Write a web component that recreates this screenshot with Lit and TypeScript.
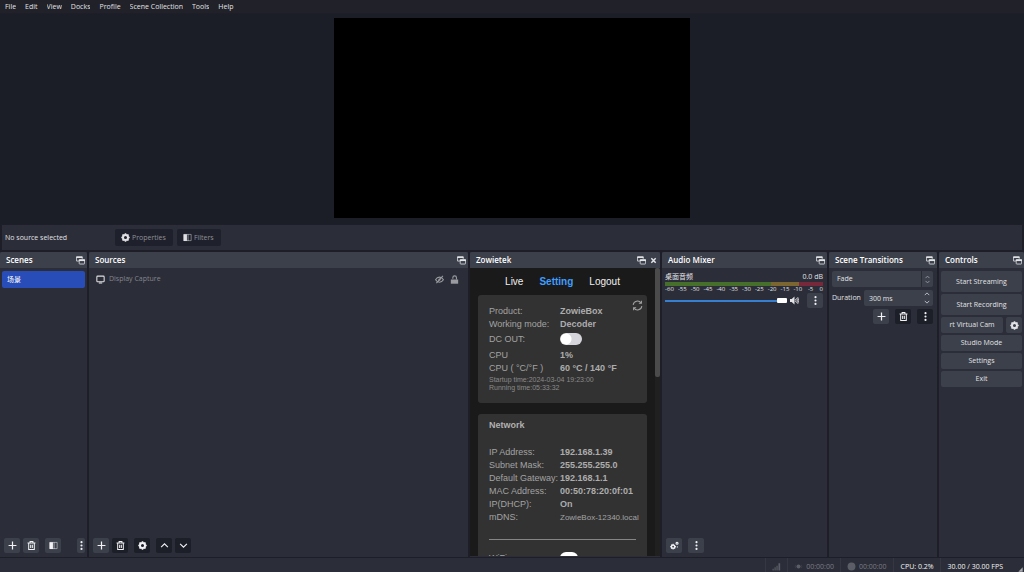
import { LitElement, html, svg, css } from "lit";
import { customElement, property } from "lit/decorators.js";

const glyphs: Record<string, unknown> = {
  plus: svg`<path d="M8 1v14M1 8h14" stroke="currentColor" stroke-width="2.200" fill="none"/>`,
  trash: svg`<path d="M1 3.500h14M5.500 3V1h5v2M3 4v11h10V4M6.500 6.500v6M9.500 6.500v6" stroke="currentColor" stroke-width="1.800" fill="none"/>`,
  filter: svg`<path d="M1.500 2.500h13v11h-13z" stroke="currentColor" stroke-width="1.200" fill="none" opacity=".7"/><path d="M1 2h6v12H1z" fill="currentColor"/><path d="M8 2h2v12H8z" fill="currentColor" opacity=".5"/>`,
  more: svg`<circle cx="8" cy="2" r="1.900" fill="currentColor"/><circle cx="8" cy="8" r="1.900" fill="currentColor"/><circle cx="8" cy="14" r="1.900" fill="currentColor"/>`,
  gear: svg`<circle cx="8" cy="8" r="4.500" stroke="currentColor" stroke-width="3.600" fill="none"/><path d="M8 .500v3M8 12.500v3M.500 8h3M12.500 8h3M2.700 2.700l2 2M11.300 11.300l2 2M13.300 2.700l-2 2M4.700 11.300l-2 2" stroke="currentColor" stroke-width="2.800"/>`,
  gears: svg`<circle cx="5.500" cy="10" r="3" stroke="currentColor" stroke-width="2.600" fill="none"/><path d="M5.500 5v2M5.500 13v2M.500 10h2M8.500 10h2M2 6.500l1.500 1.500M9 13.500L7.500 12M2 13.500L3.500 12" stroke="currentColor" stroke-width="1.800"/><circle cx="12.500" cy="4" r="1.800" stroke="currentColor" stroke-width="2" fill="none"/><circle cx="13" cy="10.500" r="1" fill="currentColor"/>`,
  up: svg`<path d="M2 11l6-6 6 6" stroke="currentColor" stroke-width="2" fill="none"/>`,
  down: svg`<path d="M2 5l6 6 6-6" stroke="currentColor" stroke-width="2" fill="none"/>`,
  float: svg`<path d="M5 9H1V1.500h10V5" stroke="currentColor" stroke-width="1.400" fill="none"/><path d="M.500 1h11v2.500H.500z" fill="currentColor"/><rect x="5.700" y="6.700" width="9.600" height="7.600" rx="1" stroke="currentColor" stroke-width="1.400" fill="none"/><path d="M5 6h11v3H5z" fill="currentColor"/>`,
  close: svg`<path d="M3 3l10 10M13 3L3 13" stroke="currentColor" stroke-width="3.400" fill="none"/>`,
  monitor: svg`<rect x="1.500" y="2" width="13" height="10" rx="1.500" stroke="currentColor" stroke-width="1.900" fill="none"/><path d="M5 14.200h6" stroke="currentColor" stroke-width="2"/>`,
  hidden: svg`<path d="M1 8.500C3 5 5.500 3.800 8 3.800s5 1.200 7 4.700c-2 3.300-4.500 4.300-7 4.300s-5-1-7-4.300z" stroke="currentColor" stroke-width="1.900" fill="none"/><circle cx="8" cy="8.200" r="2" fill="currentColor"/><path d="M2.500 14.500L14 1.500" stroke="currentColor" stroke-width="2"/>`,
  unlock: svg`<path d="M1.500 8h13v7.500h-13z" fill="currentColor"/><path d="M5 6.500V5C5 .500 11.500 .500 11.500 5v3" stroke="currentColor" stroke-width="2" fill="none"/>`,
  speaker: svg`<path d="M0 5.300h3L8 1v14l-5-4.300H0z" fill="currentColor"/><path d="M9.800 5.500q1.700 2.500 0 5M11.800 3.500q3 4.500 0 9M13.700 2q3.500 6 0 12" stroke="currentColor" stroke-width="1.500" fill="none"/>`,
  refresh: svg`<path d="M1.700 7a6.300 6.300 0 0 1 11.500-2.700M14.300 9a6.300 6.300 0 0 1-11.500 2.700" stroke="currentColor" stroke-width="1.500" fill="none"/><path d="M13.700 1v3.700H10M2.300 15v-3.700H6" stroke="currentColor" stroke-width="1.500" fill="none"/>`,
  spin: svg`<path d="M4.500 5.500L8 2l3.500 3.500M4.500 10.500L8 14l3.500-3.500" stroke="currentColor" stroke-width="1.600" fill="none"/>`,
  signal: svg`<path d="M1 12h2v3H1zM4.500 9.500h2V15h-2zM8 6.500h2V15H8zM11.500 2h3v13h-3z" fill="currentColor"/>`,
  live: svg`<circle cx="8" cy="8" r="3.600" fill="currentColor"/><path d="M3 5q-2 3 0 6M13 5q2 3 0 6" stroke="currentColor" stroke-width="1" fill="none" opacity=".5"/>`,
  dot: svg`<circle cx="8" cy="8" r="7" fill="currentColor"/>`,
  grip: svg`<path d="M15 1v14H1z" fill="currentColor"/>`,
};

const icon = (name: string, cls = "") =>
  html`<svg class="icon ${cls}" viewBox="0 0 16 16" aria-hidden="true">${glyphs[name]}</svg>`;

const shared = css`
  * { box-sizing: border-box; }
  button {
    font: inherit;
    color: inherit;
    border: 0;
    margin: 0;
    padding: 0;
    background: none;
    display: flex;
    align-items: center;
    justify-content: center;
    white-space: nowrap;
    overflow: hidden;
  }
  .icon { width: 9px; height: 9px; flex: none; display: block; }
`;

@customElement("obs-dock")
export class ObsDock extends LitElement {
  @property() heading = "";
  @property({ type: Boolean }) closable = false;

  static styles = [
    shared,
    css`
      :host { display: flex; flex-direction: column; min-width: 0; min-height: 0; background: #2b2d38; }
      header {
        display: flex;
        align-items: center;
        gap: 2px;
        height: 16px;
        flex: none;
        padding: 0 2px 0 6px;
        background: #3c404b;
        border-radius: 2px 2px 0 0;
      }
      h2 { flex: 1; margin: 0; font-size: 8px; line-height: 12px; font-weight: 600; color: #fff; white-space: nowrap; }
      .tool { width: 10px; height: 12px; color: #e4e5e8; }
      .closer { width: 7px; height: 7px; }
      .content { flex: 1; min-height: 0; display: flex; flex-direction: column; }
    `,
  ];

  render() {
    return html`
      <header>
        <h2>${this.heading}</h2>
        <button class="tool" aria-label="Undock ${this.heading}">${icon("float")}</button>
        ${this.closable
          ? html`<button class="tool" aria-label="Close ${this.heading}">${icon("close", "closer")}</button>`
          : null}
      </header>
      <div class="content"><slot></slot></div>
    `;
  }
}

@customElement("zowie-panel")
export class ZowiePanel extends LitElement {
  static styles = [
    shared,
    css`
      :host {
        flex: 1;
        min-height: 0;
        margin-bottom: 1px;
        display: flex;
        background: #1a1a1a;
        color: #a3a3a3;
        font-family: "Liberation Sans", Arial, sans-serif;
        font-size: 9px;
        line-height: 13px;
      }
      .page { flex: 1; min-width: 0; padding: 0 8px; overflow: hidden; }
      nav { display: flex; justify-content: center; gap: 16px; padding: 8px 0 7px; font-size: 10px; line-height: 12px; }
      nav a { color: #f0f0f0; text-decoration: none; }
      nav a.current { color: #409eff; font-weight: 700; }
      .card { position: relative; background: #323232; border-radius: 3px; padding: 10px 11px 11px; }
      .card + .card { margin-top: 11px; padding-top: 4px; }
      .row { display: grid; grid-template-columns: 71px 1fr; white-space: nowrap; }
      .row b { font-weight: 700; color: #adadad; }
      .switchrow { align-items: center; height: 14px; margin: 1px 0 3px; }
      .note { margin: 0; font-size: 7px; line-height: 8px; color: #8a8a8a; white-space: nowrap; }
      .first { padding-top: 1px; }
      .small { font-size: 8px; }
      h3 { margin: 0 0 14px; font-size: 9px; line-height: 14px; color: #b0b0b0; }
      hr { border: 0; height: 1px; background: #858585; margin: 15px 0 12px; }
      .refresh { position: absolute; top: 4px; right: 4px; width: 12px; height: 12px; }
      .refresh .icon { width: 11px; height: 11px; }
      input {
        appearance: none;
        width: 22px;
        height: 12px;
        margin: 0;
        border-radius: 6px;
        background: radial-gradient(circle at 6px 6px, #fff 5px, transparent 6px) #d5d5db;
      }
      .wifi { background: #fff; width: 18px; }
      .track { width: 5px; flex: none; background: #202020; }
      .thumb { height: 38%; background: #4b4b4b; border-radius: 2px; }
    `,
  ];

  private row = (label: string, value: string) =>
    html`<div class="row"><span>${label}</span><b>${value}</b></div>`;

  render() {
    return html`
      <div class="page">
        <nav><a href="#live">Live</a><a class="current" href="#setting">Setting</a><a href="#logout">Logout</a></nav>
        <section class="card">
          <button class="refresh" aria-label="Refresh">${icon("refresh")}</button>
          ${this.row("Product:", "ZowieBox")} ${this.row("Working mode:", "Decoder")}
          <div class="row switchrow"><label for="dc">DC OUT:</label><input id="dc" type="checkbox" role="switch" /></div>
          ${this.row("CPU", "1%")} ${this.row("CPU ( °C/°F )", "60 °C / 140 °F")}
          <p class="note first">Startup time:2024-03-04 19:23:00</p>
          <p class="note">Running time:05:33:32</p>
        </section>
        <section class="card">
          <h3>Network</h3>
          ${this.row("IP Address:", "192.168.1.39")} ${this.row("Subnet Mask:", "255.255.255.0")}
          ${this.row("Default Gateway:", "192.168.1.1")} ${this.row("MAC Address:", "00:50:78:20:0f:01")}
          ${this.row("IP(DHCP):", "On")}
          <div class="row"><span>mDNS:</span><span class="small">ZowieBox-12340.local</span></div>
          <hr />
          <div class="row"><label for="wifi">WiFi:</label><input id="wifi" class="wifi" type="checkbox" role="switch" /></div>
        </section>
      </div>
      <div class="track"><div class="thumb"></div></div>
    `;
  }
}

@customElement("app-root")
export class AppRoot extends LitElement {
  static styles = [
    shared,
    css`
      :host {
        display: grid;
        grid-template-rows: 13px minmax(0, 210fr) 26px minmax(0, 305fr) 14px;
        row-gap: 1px;
        height: 100vh;
        background: #1d1e28;
        color: #e2e3e6;
        font-family: "Open Sans", "Noto Sans", "Noto Sans CJK SC", sans-serif;
        font-size: 7px;
        line-height: 10px;
        overflow: hidden;
      }
      .menu { display: flex; align-items: center; gap: 9px; padding: 0 5px; background: #202129; }
      .preview { display: flex; justify-content: center; padding: 4px 0 6px; background: #1b1d27; }
      .canvas { height: 100%; aspect-ratio: 16 / 9; background: #000; }
      .context { display: flex; align-items: center; gap: 4px; margin: 0 2px 1px; padding: 0 3px; background: #2b2d38; }
      .context span { width: 106px; }
      .context button { height: 17px; gap: 2px; padding: 0 7px 0 6px; border-radius: 2px; background: #1e202b; color: #8e9097; }
      .context .icon { color: #e0e0e4; }
      .docks {
        display: grid;
        grid-template-columns:
          minmax(0, 87fr) minmax(0, 379fr) minmax(0, 190fr) minmax(0, 165fr) minmax(0, 108fr) minmax(0, 85fr);
        gap: 2px;
      }
      .scene { height: 17px; margin: 3px 2px 0; padding: 0 5px; border-radius: 2px; background: #284cb8; color: #fff; justify-content: flex-start; }
      .source { display: flex; align-items: center; gap: 4px; padding: 6px 8px 0 7px; color: #85868d; }
      .source .grow { flex: 1; }
      .source .screen { color: #dedfe2; }
      .source button { width: 11px; color: #9a9ba1; }
      .tools { display: flex; gap: 3px; align-items: center; margin-top: auto; padding: 0 2px 4px 4px; }
      .sq { width: 16px; height: 15px; border-radius: 2px; background: #3c404b; color: #f2f2f4; }
      .dark { background: #1c1e28; }
      .gap { margin-left: 3px; }
      .last { margin-left: auto; width: 8px; }
      .mixer { padding: 4px 4px 0 3px; }
      .line { display: flex; justify-content: space-between; }
      .meter { height: 4px; background: linear-gradient(90deg, #466f2b 67%, #7b6531 67% 85%, #78283b 85%); }
      .scale { display: flex; justify-content: space-between; font-family: "Liberation Sans Narrow", "Open Sans", sans-serif; font-size: 6px; line-height: 7px; }
      .scale span { width: 9px; white-space: nowrap; text-align: center; }
      .scale span:last-child { width: 4px; text-align: right; }
      .fader { display: flex; align-items: center; gap: 3px; }
      .fader input { appearance: none; flex: 1; min-width: 0; height: 5px; margin: 0; background: linear-gradient(#377fd0, #377fd0) center / 100% 2px no-repeat; }
      .fader input::-webkit-slider-thumb { appearance: none; width: 10px; height: 5px; border-radius: 1px; background: #fff; }
      .fader .sq { margin-left: 5px; }
      .form { display: grid; grid-template-columns: auto 1fr; gap: 3px; padding: 3px 4px 0 3px; align-items: center; }
      .field { display: flex; align-items: center; height: 16px; min-width: 0; border-radius: 2px; background: #3c404b; }
      .wide { grid-column: 1 / -1; }
      select, .field input {
        appearance: none;
        flex: 1;
        min-width: 0;
        height: 100%;
        font: inherit;
        color: inherit;
        background: none;
        border: 0;
        margin: 0;
        padding: 0 5px;
      }
      .field.wide .icon { margin: 0 1px; color: #999ba2; }
      select { border-right: 1px solid #292b35; }
      .spin { width: 12px; height: 100%; display: grid; }
      .spin .icon { width: 6px; height: 6px; }
      .actions { display: flex; gap: 6px; justify-content: flex-end; }
      .controls { display: flex; flex-direction: column; gap: 2px; padding: 3px 2px 0; }
      .controls button { height: 16px; border-radius: 2px; background: #3c404b; }
      .controls .tall { height: 21px; }
      .pair { display: grid; grid-template-columns: 1fr 16px; gap: 3px; }
      .status { display: flex; align-items: stretch; justify-content: flex-end; background: #2b2d38; color: #7a7c84; padding-right: 1px; }
      .status div { display: flex; align-items: center; gap: 3px; padding: 3px 6px 0; border-left: 1px solid #353742; white-space: nowrap; }
      .status .icon { color: #5c5e67; }
      .status .lit { color: #f4f4f5; padding-left: 7px; }
      .status .end { padding-right: 15px; }
      .status .grip { width: 5px; height: 5px; align-self: flex-end; color: #a8a9af; }
    `,
  ];

  private tool = (name: string, label: string, cls = "") =>
    html`<button class="sq ${cls}" aria-label=${label}>${icon(name)}</button>`;

  render() {
    const menus = ["File", "Edit", "View", "Docks", "Profile", "Scene Collection", "Tools", "Help"];
    const ticks = [-60, -55, -50, -45, -40, -35, -30, -25, -20, -15, -10, -5, 0];
    return html`
      <nav class="menu">${menus.map((m) => html`<button>${m}</button>`)}</nav>
      <main class="preview"><div class="canvas"></div></main>
      <div class="context">
        <span>No source selected</span>
        <button>${icon("gear")}Properties</button>
        <button>${icon("filter")}Filters</button>
      </div>
      <div class="docks">
        <obs-dock heading="Scenes">
          <button class="scene">场景</button>
          <div class="tools">
            ${this.tool("plus", "Add scene")} ${this.tool("trash", "Remove scene")}
            ${this.tool("filter", "Scene filters", "gap")} ${this.tool("more", "More", "last")}
          </div>
        </obs-dock>
        <obs-dock heading="Sources">
          <div class="source">
            ${icon("monitor", "screen")}<span class="grow">Display Capture</span>
            <button aria-label="Show source">${icon("hidden")}</button>
            <button aria-label="Lock source">${icon("unlock")}</button>
          </div>
          <div class="tools">
            ${this.tool("plus", "Add source")} ${this.tool("trash", "Remove source", "dark")}
            ${this.tool("gear", "Source properties", "dark gap")} ${this.tool("up", "Move up", "dark gap")}
            ${this.tool("down", "Move down", "dark")}
          </div>
        </obs-dock>
        <obs-dock heading="Zowietek" closable><zowie-panel></zowie-panel></obs-dock>
        <obs-dock heading="Audio Mixer">
          <div class="mixer">
            <div class="line"><label for="volume">桌面音频</label><span>0.0 dB</span></div>
            <div class="meter"></div>
            <div class="scale">${ticks.map((t) => html`<span>${t}</span>`)}</div>
            <div class="fader">
              <input id="volume" type="range" min="0" max="100" value="100" />
              ${icon("speaker")} ${this.tool("more", "Audio options")}
            </div>
          </div>
          <div class="tools">${this.tool("gears", "Advanced audio")} ${this.tool("more", "Mixer menu", "gap")}</div>
        </obs-dock>
        <obs-dock heading="Scene Transitions">
          <div class="form">
            <div class="field wide">
              <select aria-label="Transition"><option>Fade</option></select>${icon("spin")}
            </div>
            <label for="duration">Duration</label>
            <div class="field">
              <input id="duration" value="300 ms" />
              <div class="spin">
                <button aria-label="Increase">${icon("up")}</button><button aria-label="Decrease">${icon("down")}</button>
              </div>
            </div>
            <div class="actions wide">
              ${this.tool("plus", "Add transition")} ${this.tool("trash", "Remove transition", "dark")}
              ${this.tool("more", "Transition menu", "dark")}
            </div>
          </div>
        </obs-dock>
        <obs-dock heading="Controls">
          <div class="controls">
            <button class="tall">Start Streaming</button>
            <button class="tall">Start Recording</button>
            <div class="pair"><button>rt Virtual Cam</button><button aria-label="Virtual camera settings">${icon("gear")}</button></div>
            <button>Studio Mode</button>
            <button>Settings</button>
            <button>Exit</button>
          </div>
        </obs-dock>
      </div>
      <footer class="status">
        <div>${icon("signal")}</div>
        <div>${icon("live")}<span>00:00:00</span></div>
        <div>${icon("dot")}<span>00:00:00</span></div>
        <div class="lit">CPU: 0.2%</div>
        <div class="lit end">30.00 / 30.00 FPS</div>
        ${icon("grip", "grip")}
      </footer>
    `;
  }
}
